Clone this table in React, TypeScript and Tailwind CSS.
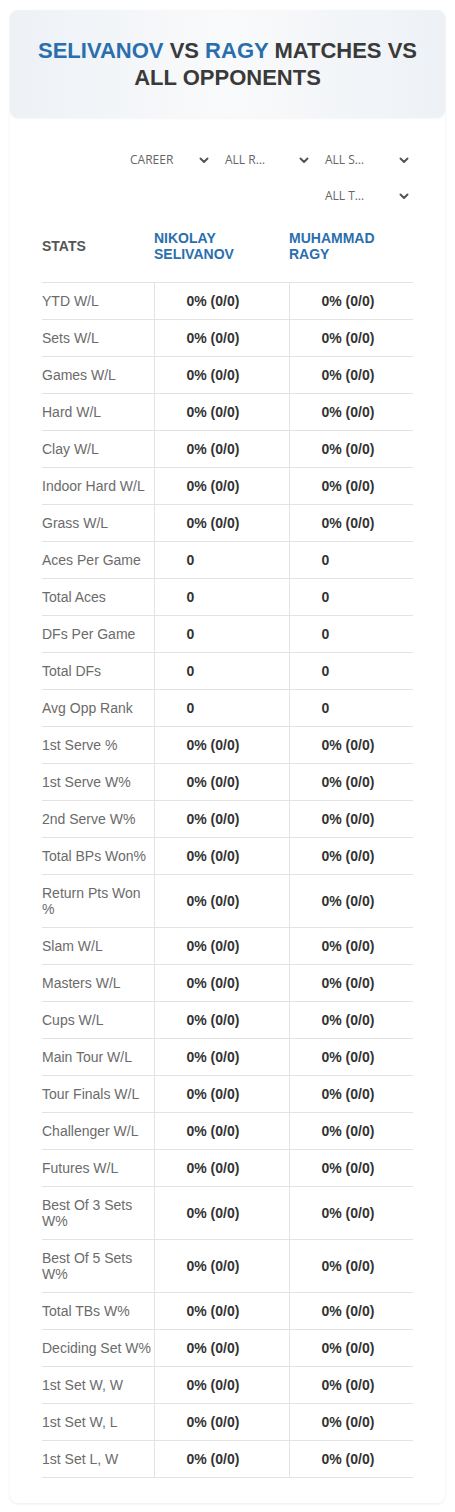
import React from "react";

type Row = { label: string; a: string; b: string };

const pct = "0% (0/0)";

const rows: Row[] = [
    {label: "YTD W/L", a: pct, b: pct},
    {label: "Sets W/L", a: pct, b: pct},
    {label: "Games W/L", a: pct, b: pct},
    {label: "Hard W/L", a: pct, b: pct},
    {label: "Clay W/L", a: pct, b: pct},
    {label: "Indoor Hard W/L", a: pct, b: pct},
    {label: "Grass W/L", a: pct, b: pct},
    {label: "Aces Per Game", a: "0", b: "0"},
    {label: "Total Aces", a: "0", b: "0"},
    {label: "DFs Per Game", a: "0", b: "0"},
    {label: "Total DFs", a: "0", b: "0"},
    {label: "Avg Opp Rank", a: "0", b: "0"},
    {label: "1st Serve %", a: pct, b: pct},
    {label: "1st Serve W%", a: pct, b: pct},
    {label: "2nd Serve W%", a: pct, b: pct},
    {label: "Total BPs Won%", a: pct, b: pct},
    {label: "Return Pts Won %", a: pct, b: pct},
    {label: "Slam W/L", a: pct, b: pct},
    {label: "Masters W/L", a: pct, b: pct},
    {label: "Cups W/L", a: pct, b: pct},
    {label: "Main Tour W/L", a: pct, b: pct},
    {label: "Tour Finals W/L", a: pct, b: pct},
    {label: "Challenger W/L", a: pct, b: pct},
    {label: "Futures W/L", a: pct, b: pct},
    {label: "Best Of 3 Sets W%", a: pct, b: pct},
    {label: "Best Of 5 Sets W%", a: pct, b: pct},
    {label: "Total TBs W%", a: pct, b: pct},
    {label: "Deciding Set W%", a: pct, b: pct},
    {label: "1st Set W, W", a: pct, b: pct},
    {label: "1st Set W, L", a: pct, b: pct},
    {label: "1st Set L, W", a: pct, b: pct},
];

const Chevron = () => (
    <svg width="10" height="7" viewBox="0 0 10 7" className="shrink-0">
        <polyline points="1.5,1.5 5,5 8.5,1.5" fill="none" stroke="#555" strokeWidth="2" strokeLinecap="round" strokeLinejoin="round"/>
    </svg>
);

const Filter = ({text, pad = "pl-[12px]"}: { text: string; pad?: string }) => (
    <div className={`w-[100px] h-[36px] flex items-center justify-between pr-[4px] ${pad}`}>
        <span className="text-[12px] text-[#666] font-[family-name:'Open_Sans',sans-serif]">{text}</span>
        <Chevron/>
    </div>
);

const App = () => {
    return (
        <div className="min-h-screen bg-white pt-[10px] px-[10px] font-[family-name:'Liberation_Sans',Arial,sans-serif]">
            <div className="rounded-lg shadow-[0_1px_3px_rgba(0,0,0,0.08)] pb-[25px]">
                <div className="h-[108px] rounded-lg bg-linear-to-r from-[#edf1f6] via-[#f9fafb] to-[#edf1f6] shadow-[0_1px_2px_rgba(0,0,0,0.04)] flex items-center justify-center px-6">
                    <h1 className="text-center text-[22px] leading-[27px] font-bold text-[#3a3a3a]">
                        <span className="text-[#2a6fad]">SELIVANOV</span> VS{" "}
                        <span className="text-[#2a6fad]">RAGY</span> MATCHES VS ALL OPPONENTS
                    </h1>
                </div>

                <div className="px-[32px] pt-[24px]">
                    <div className="flex flex-wrap justify-end">
                        <Filter text="CAREER" pad="pl-[17px]"/>
                        <Filter text="ALL R…"/>
                        <Filter text="ALL S…"/>
                        <Filter text="ALL T…"/>
                    </div>

                    <table className="w-full table-fixed border-collapse">
                        <colgroup>
                            <col className="w-[112px]"/>
                            <col className="w-[135px]"/>
                            <col/>
                        </colgroup>
                        <thead>
                        <tr className="border-b border-[#e3e3e3]">
                            <th className="text-left align-middle pt-[16px] pb-[20px] text-[14px] leading-[16px] font-bold text-[#555]">STATS</th>
                            <th className="text-left align-middle pt-[16px] pb-[20px] text-[14px] leading-[16px] font-bold text-[#2a6fad]">NIKOLAY<br/>SELIVANOV</th>
                            <th className="text-left align-middle pt-[16px] pb-[20px] text-[14px] leading-[16px] font-bold text-[#2a6fad]">MUHAMMAD<br/>RAGY</th>
                        </tr>
                        </thead>
                        <tbody>
                        {rows.map((row) => (
                            <tr key={row.label} className="border-b border-[#e3e3e3]">
                                <td className="py-[10px] text-[14px] leading-[16px] text-[#6b6b6b] align-middle">{row.label}</td>
                                <td className="py-[10px] pl-[32px] border-l border-[#e3e3e3] text-[14px] leading-[16px] font-bold text-[#333] align-middle">{row.a}</td>
                                <td className="py-[10px] pl-[32px] border-l border-[#e3e3e3] text-[14px] leading-[16px] font-bold text-[#333] align-middle">{row.b}</td>
                            </tr>
                        ))}
                        </tbody>
                    </table>
                </div>
            </div>
        </div>
    );
};

export default App;
